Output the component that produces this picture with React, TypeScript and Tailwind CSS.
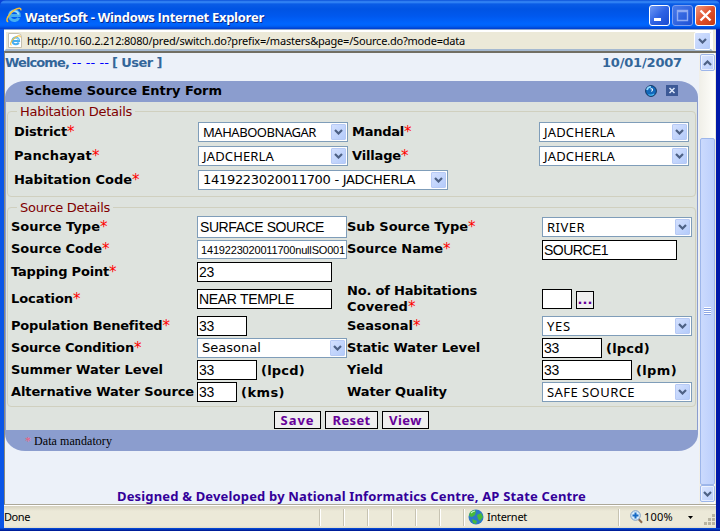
import { useLayoutEffect, useRef, useState } from 'react'
import type { ReactNode } from 'react'

const BOLD = "font-['Verdana','DejaVu_Sans',sans-serif] text-[13px] font-bold leading-4"
const TAHOMA = "font-['Tahoma','Noto_Sans',sans-serif]"
const TAHOMA_BOLD = "font-['Tahoma','Noto_Sans',sans-serif] text-[13px] font-bold leading-4"
const VERDANA = "font-['Verdana','DejaVu_Sans',sans-serif]"
const ARIAL = "font-['Liberation_Sans',Arial,sans-serif]"

/* Text whose letters are spaced so that the run is exactly w pixels wide. */
function Fit({ children, w, className = '' }: { children: string; w: number; className?: string }) {
  const ref = useRef<HTMLSpanElement>(null)
  const [gap, setGap] = useState(0)
  useLayoutEffect(() => {
    if (ref.current) setGap((w - ref.current.getBoundingClientRect().width) / children.length)
  }, [w, children])
  return (
    <span ref={ref} className={`inline-block whitespace-pre ${className}`} style={{ letterSpacing: gap }}>
      {children}
    </span>
  )
}

function Label({ text, w, star = false }: { text: string; w: number; star?: boolean }) {
  return (
    <div className={`${BOLD} flex whitespace-nowrap text-black`}>
      <Fit w={w}>{text}</Fit>
      {star && <span className="text-[15px] leading-[17px] font-normal text-[#f00]">*</span>}
    </div>
  )
}

function Chevron({ up = false }: { up?: boolean }) {
  return (
    <svg width="9" height="6" viewBox="0 0 9 6" className={up ? 'rotate-180' : ''}>
      <path d="M1 1 L4.5 4.5 L8 1" fill="none" stroke="#4d6185" strokeWidth="2.2" />
    </svg>
  )
}

function Select({ text, tw, box = 'w-[150px]', font = TAHOMA }: {
  text: string; tw: number; box?: string; font?: string
}) {
  return (
    <div className={`flex h-5 items-center justify-between border border-[#7f9db9] bg-white pr-px pl-1 ${box}`}>
      <Fit w={tw} className={`${font} text-[13px] leading-4 text-black`}>{text}</Fit>
      <span className="flex h-4 w-[15px] items-center justify-center rounded-[1px] border border-[#b7caf5] bg-linear-to-br from-[#d3e0fe] to-[#b4cbfa]">
        <Chevron />
      </span>
    </div>
  )
}

function Field({ text = '', tw = 0, box, soft = false, size = 'h-5 text-[14px]', pad = 'pl-px' }: {
  text?: string; tw?: number; box: string; soft?: boolean; size?: string; pad?: string
}) {
  return (
    <div className={`flex items-center border bg-white ${soft ? 'border-[#7f9db9]' : 'border-black'} ${size} ${box} ${pad}`}>
      {text && <Fit w={tw} className={`${ARIAL} leading-4 text-black`}>{text}</Fit>}
    </div>
  )
}

function Unit({ text, w, children }: { text: string; w: number; children: ReactNode }) {
  return (
    <div className="flex items-center gap-1">
      {children}
      <div className="pt-0.5"><Label text={text} w={w} /></div>
    </div>
  )
}

function Action({ text, w, box }: { text: string; w: number; box: string }) {
  return (
    <button className={`flex h-[18px] items-center justify-center border border-black bg-[#efefef] ${TAHOMA_BOLD} text-[#609] ${box}`}>
      <Fit w={w}>{text}</Fit>
    </button>
  )
}

function IELogo({ size }: { size: number }) {
  return (
    <svg width={size} height={size} viewBox="0 0 16 16">
      <path d="M12.7 10.8 A4.9 4.9 0 1 1 13.2 8.6 H5" fill="none" stroke="#46aef0" strokeWidth="3" />
      <path d="M12.6 7.6 A4.6 4.6 0 0 0 4 6.6" fill="none" stroke="#a4dffb" strokeWidth="1.6" />
      <path d="M2.2 14.8 C-1.2 14 2.6 6.5 8.5 2.9 C12 .7 15.4 .2 14.8 3.4" fill="none" stroke="#f6bd35" strokeWidth="1.5" />
    </svg>
  )
}

function WindowButton({ kind }: { kind: 'min' | 'max' | 'close' }) {
  const look =
    kind === 'close'
      ? 'border-white bg-linear-to-br from-[#f0967c] via-[#e0502a] to-[#c63a12]'
      : kind === 'max'
        ? 'border-[#7d9ff0] bg-linear-to-br from-[#4a7bea] to-[#1c4fd6]'
        : 'border-white bg-linear-to-br from-[#6f98f4] via-[#2f63e4] to-[#1a4bd0]'
  return (
    <div className={`flex size-[21px] items-center justify-center rounded-[3px] border ${look}`}>
      <svg width="19" height="19" viewBox="0 0 19 19">
        {kind === 'min' && <rect x="4" y="12" width="7" height="3" fill="#fff" />}
        {kind === 'max' && <path d="M4.5 4.5 H14.5 V14.5 H4.5 Z M4 5.5 H15" fill="none" stroke="#8fabf3" strokeWidth="1.4" />}
        {kind === 'close' && <path d="M4.5 4.5 L14.5 14.5 M14.5 4.5 L4.5 14.5" stroke="#fff" strokeWidth="2.4" />}
      </svg>
    </div>
  )
}

function ScrollButton({ up = false }: { up?: boolean }) {
  return (
    <div className="flex h-[17px] w-[15px] items-center justify-center rounded-[2px] border border-[#9db6ea] bg-linear-to-br from-[#dbe6ff] to-[#b9cdfb] outline -outline-offset-2 outline-white/60">
      <Chevron up={up} />
    </div>
  )
}

function Legend({ text, w }: { text: string; w: number }) {
  return (
    <legend className={`ml-[9px] h-[15px] px-[3px] ${VERDANA} text-[13px] leading-4 text-[#800000]`}>
      <Fit w={w}>{text}</Fit>
    </legend>
  )
}

export default function App() {
  return (
    <div className="flex h-[531px] w-[720px] flex-col overflow-hidden bg-[#0842d8]">
      <header className="flex h-[29px] shrink-0 items-center rounded-t-[6px] bg-[linear-gradient(#0a50d8_0,#3a8cf8_2px,#0a5ce6_4px,#0054e3_9px,#0058ee_16px,#0066ff_24px,#0061f5_26px,#003dcc_29px)] pr-1 pl-1.5">
        <IELogo size={16} />
        <Fit w={239} className="ml-[3px] pt-1 font-['Trebuchet_MS','Open_Sans',sans-serif] text-[13px] leading-4 font-bold text-white [text-shadow:1px_1px_0_#0a2a8a]">
          WaterSoft - Windows Internet Explorer
        </Fit>
        <div className="ml-auto flex gap-0.5 pt-0.5">
          <WindowButton kind="min" />
          <WindowButton kind="max" />
          <WindowButton kind="close" />
        </div>
      </header>

      <div className="flex h-[499px] shrink-0 flex-col border-r-4 border-l-4 border-r-[#0019a8] border-l-[#0a55e6] bg-[#ece9d8]">
        <div className="flex h-[22px] shrink-0 items-center border-t border-t-[#8ea6cc] pr-[3px]">
          <div className="flex h-[21px] flex-1 items-center border-2 border-white border-b-[#a5b9d0] pl-0.5">
            <span className="flex h-[15px] w-[14px] items-center justify-center rounded-tr border border-[#c4c0b0] bg-white">
              <IELogo size={11} />
            </span>
            <Fit w={438} className={`${TAHOMA} ml-[5px] text-[11px] leading-4 text-black`}>
              http://10.160.2.212:8080/pred/switch.do?prefix=/masters&amp;page=/Source.do?mode=data
            </Fit>
            <span className="ml-auto flex h-[18px] w-[17px] items-center justify-center rounded-[2px] border border-white bg-linear-to-br from-[#d3e0fe] to-[#b4cbfa]">
              <Chevron />
            </span>
          </div>
        </div>

        <div className="flex h-[454px] shrink-0 border-t-2 border-b border-l border-t-[#716f64] border-b-[#aca899] border-l-[#8a887c]">
          <main className="flex w-[694px] shrink-0 flex-col bg-[#ecf1f9]">
            <div className={`flex h-7 pt-0.5 pr-[17px] ${BOLD} text-[#369]`}>
              <Fit w={64}>Welcome,</Fit>
              <Fit w={37} className="ml-[3px] font-normal text-[#00f]">-- -- --</Fit>
              <Fit w={50} className="ml-[3px]">[ User ]</Fit>
              <Fit w={80} className="ml-auto">10/01/2007</Fit>
            </div>

            <div className="flex h-[21px] w-[693px] items-center justify-between rounded-t-[20px_16px] bg-[#8b9dce] pr-5 pl-5">
              <div className={`${BOLD} pb-0.5 text-black`}><Fit w={197}>Scheme Source Entry Form</Fit></div>
              <div className="flex items-center gap-[9px] pb-0.5">
                <svg width="12" height="12" viewBox="0 0 12 12">
                  <circle cx="6" cy="6" r="5.4" fill="#1268ba" stroke="#123660" />
                  <path d="M2 5 A4 4 0 0 1 6 1.8" fill="none" stroke="#8fd8ff" strokeWidth="1.8" />
                  <path d="M5.5 4 Q8 3 7.3 5.5 L6.4 6.5" fill="none" stroke="#fff" strokeWidth="1.1" />
                  <path d="M3.5 9.5 Q6 11 9 9" fill="none" stroke="#45b8f4" strokeWidth="1.4" />
                </svg>
                <svg width="12" height="11" viewBox="0 0 12 11">
                  <rect width="12" height="11" fill="#3c5996" />
                  <path d="M3.5 3 L8.5 8 M8.5 3 L3.5 8" stroke="#dde8fa" strokeWidth="1.5" />
                </svg>
              </div>
            </div>

            <div className="flex h-[328px] w-[693px] flex-col border-x border-[#8b9dce] bg-[#dee3de] px-px pt-0.5">
              <fieldset className="h-[93px] w-[689px] rounded-[4px] border border-[#d0d0bf]">
                <Legend text="Habitation Details" w={112} />
                <div className="grid grid-cols-[184px_154px_187px_150px] grid-rows-[24px_24px_24px] items-center pt-px pl-1.5">
                  <Label text="District" w={53} star />
                  <Select text="MAHABOOBNAGAR" tw={113} />
                  <Label text="Mandal" w={52} star />
                  <Select text="JADCHERLA" tw={71} />
                  <Label text="Panchayat" w={78} star />
                  <Select text="JADCHERLA" tw={71} />
                  <Label text="Village" w={49} star />
                  <Select text="JADCHERLA" tw={71} />
                  <Label text="Habitation Code" w={118} star />
                  <Select text="1419223020011700 - JADCHERLA" tw={212} box="w-[250px]" font={VERDANA} />
                </div>
              </fieldset>

              <fieldset className="mt-[3px] h-[207px] w-[689px] rounded-[4px] border border-[#d0d0bf]">
                <Legend text="Source Details" w={90} />
                <div className="grid grid-cols-[186px_150px_195px_150px] grid-rows-[22px_23px_22px_32px_22px_22px_22px_22px] items-center pt-px pl-[3px]">
                  <Label text="Source Type" w={89} star />
                  <Field text="SURFACE SOURCE" tw={124} soft box="w-[150px]" size="h-[22px] text-[14px]" pad="pl-0.5" />
                  <Label text="Sub Source Type" w={121} star />
                  <Select text="RIVER" tw={38} />

                  <Label text="Source Code" w={91} star />
                  <Field text="1419223020011700nullSO001" tw={144} soft box="w-[150px]" size="h-[19px] text-[11px]" pad="pl-[3px]" />
                  <Label text="Source Name" w={96} star />
                  <Field text="SOURCE1" tw={64} box="w-[135px]" />

                  <Label text="Tapping Point" w={98} star />
                  <Field text="23" tw={15} box="w-[135px]" />
                  <span />
                  <span />

                  <Label text="Location" w={62} star />
                  <Field text="NEAR TEMPLE" tw={95} box="w-[135px]" />
                  <div>
                    <Label text="No. of Habitations" w={130} />
                    <Label text="Covered" w={61} star />
                  </div>
                  <div className="flex items-end gap-1">
                    <Field box="w-[30px]" />
                    <button className={`h-[18px] w-[18px] border border-black bg-[#efefef] ${BOLD} text-[#609]`}>...</button>
                  </div>

                  <Label text="Population Benefited" w={151} star />
                  <Field text="33" tw={15} box="w-[50px]" />
                  <Label text="Seasonal" w={66} star />
                  <Select text="YES" tw={24} />

                  <Label text="Source Condition" w={123} star />
                  <Select text="Seasonal" tw={59} font={VERDANA} />
                  <Label text="Static Water Level" w={133} />
                  <Unit text="(lpcd)" w={44}><Field text="33" tw={15} box="w-[60px]" /></Unit>

                  <Label text="Summer Water Level" w={152} />
                  <Unit text="(lpcd)" w={44}><Field text="33" tw={15} box="w-[60px]" /></Unit>
                  <Label text="Yield" w={36} />
                  <Unit text="(lpm)" w={41}><Field text="33" tw={15} box="w-[90px]" /></Unit>

                  <Label text="Alternative Water Source" w={183} />
                  <Unit text="(kms)" w={44}><Field text="33" tw={15} box="w-10" /></Unit>
                  <Label text="Water Quality" w={100} />
                  <Select text="SAFE SOURCE" tw={88} />
                </div>
              </fieldset>

              <div className="mt-1 flex gap-1 pl-[267px]">
                <Action text="Save" w={34} box="w-[47px]" />
                <Action text="Reset" w={38} box="w-[53px]" />
                <Action text="View" w={33} box="w-[47px]" />
              </div>
            </div>

            <div className="flex h-[21px] w-[693px] items-center rounded-b-[20px_17px] bg-[#8b9dce] pl-5 font-['Liberation_Serif',serif] text-[12px] leading-4">
              <span className="w-[9px] text-[#f06080]">*</span>
              <Fit w={78} className="text-[12px] text-black">Data mandatory</Fit>
            </div>

            <div className={`mt-[37px] pl-[112px] ${TAHOMA_BOLD} text-[#309]`}>
              <Fit w={469}>Designed &amp; Developed by National Informatics Centre, AP State Centre</Fit>
            </div>
          </main>

          <aside className="flex w-[16px] shrink-0 flex-col bg-linear-to-r from-[#f0efe8] to-[#fefefb] pt-px pl-px">
            <ScrollButton up />
            <div className="mt-[67px] flex h-[347px] w-[15px] flex-col items-center justify-center gap-px rounded-[2px] border border-[#9db6ea] bg-linear-to-r from-[#cbdafd] to-[#bccffc]">
              {[0, 1, 2, 3].map((i) => (
                <span key={i} className="h-px w-[7px] bg-[#8ba5e4] shadow-[0_-1px_0_#fff]" />
              ))}
            </div>
            <ScrollButton />
          </aside>
        </div>

        <footer className={`flex h-[23px] shrink-0 items-center border-t border-white bg-[linear-gradient(#d5d1bf,#ece9d8_5px,#ece9d8_20px,#dedac8)] ${TAHOMA} text-[11px] leading-4 text-black`}>
          <Fit w={26}>Done</Fit>
          <div className="ml-[289px] flex gap-[22px]">
            {[0, 1, 2, 3, 4, 5, 6].map((i) => (
              <span key={i} className="h-[17px] w-0.5 border-r border-white bg-[#c7c3b2]" />
            ))}
          </div>
          <svg width="16" height="16" viewBox="0 0 16 16" className="ml-[3px]">
            <circle cx="8" cy="8" r="7.5" fill="#2b78c8" />
            <path d="M2 3 Q6 0 8 2 L7 6 L4 8 L1 7 Z M9 6 L13 4 L15 8 L12 12 L10 10 Z M4 10 L9 12 L8 15 L5 14 Z" fill="#48b93c" />
            <path d="M3 4 Q5 2 7 2" fill="none" stroke="#c9f0d4" strokeWidth="1.2" />
          </svg>
          <Fit w={40} className="ml-[3px]">Internet</Fit>
          <span className="ml-[91px] h-[17px] w-0.5 border-r border-white bg-[#c7c3b2]" />
          <svg width="13" height="14" viewBox="0 0 13 14" className="ml-[10px]">
            <path d="M8.5 9 L12 12.8" stroke="#8a6a50" strokeWidth="2" />
            <circle cx="5.5" cy="5.5" r="4.8" fill="#d8ecfb" stroke="#7a9cc4" />
            <path d="M5.5 2.5 V8.5 M2.5 5.5 H8.5" stroke="#1569c4" strokeWidth="2" />
          </svg>
          <Fit w={29} className="ml-px">100%</Fit>
          <svg width="5" height="3" viewBox="0 0 5 3" className="ml-[15px]"><path d="M0 0 H5 L2.5 3 Z" fill="#000" /></svg>
          <svg width="12" height="12" viewBox="0 0 12 12" className="mt-1.5 ml-auto" fill="#b8b4a2">
            <path d="M8 0h3v3H8zM4 4h3v3H4zM8 4h3v3H8zM0 8h3v3H0zM4 8h3v3H4zM8 8h3v3H8z" />
          </svg>
        </footer>
      </div>
      <div className="h-[3px] shrink-0 bg-linear-to-b from-[#0a50e0] to-[#00138c]" />
    </div>
  )
}
